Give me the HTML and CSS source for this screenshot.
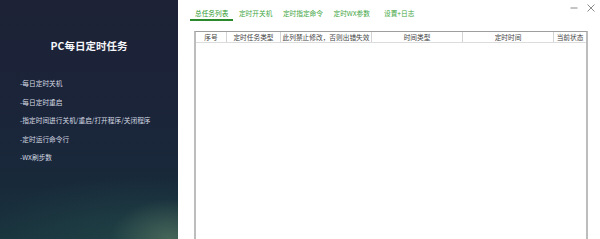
FILE: index.html
```html
<!DOCTYPE html>
<html lang="zh">
<head>
<meta charset="utf-8">
<title>PC每日定时任务</title>
<link rel="stylesheet" href="styles.css">
</head>
<body>
<div class="app">
  <aside class="sidebar">
    <h1 class="title">PC每日定时任务</h1>
    <ul class="features">
      <li>-每日定时关机</li>
      <li>-每日定时重启</li>
      <li>-指定时间进行关机/重启/打开程序/关闭程序</li>
      <li>-定时运行命令行</li>
      <li>-WX刷步数</li>
    </ul>
  </aside>
  <main class="main">
    <nav class="tabs">
      <span class="tab active">总任务列表</span>
      <span class="tab">定时开关机</span>
      <span class="tab">定时指定命令</span>
      <span class="tab">定时WX参数</span>
      <span class="tab">设置+日志</span>
    </nav>
    <div class="table">
      <div class="thead">
        <div class="th">序号</div>
        <div class="th">定时任务类型</div>
        <div class="th">此列禁止修改，否则出错失效</div>
        <div class="th">时间类型</div>
        <div class="th">定时时间</div>
        <div class="th">当前状态</div>
      </div>
      <div class="tbody"></div>
    </div>
    <div class="winctrl">
      <svg class="ico" width="8" height="8" viewBox="0 0 8 8"><path d="M0.5 4H7.5" stroke="#8a8a8a" stroke-width="1"/></svg>
      <svg class="ico" width="8" height="8" viewBox="0 0 8 8"><path d="M0.5 0.5L7.5 7.5M7.5 0.5L0.5 7.5" stroke="#8a8a8a" stroke-width="1"/></svg>
    </div>
  </main>
</div>
</body>
</html>
```
FILE: styles.css
```css
* { box-sizing: border-box; }
html, body { margin: 0; padding: 0; }
body {
  width: 600px;
  height: 239px;
  overflow: hidden;
  background: #fff;
  font-family: "Noto Sans CJK SC", "Noto Sans", sans-serif;
}
.app {
  display: flex;
  width: 600px;
  height: 239px;
}
.sidebar {
  width: 178px;
  flex: none;
  height: 239px;
  padding-top: 38px;
  background:
    radial-gradient(ellipse 60px 40px at 170px 239px, rgba(110,140,110,0.5), rgba(60,90,85,0) 100%),
    radial-gradient(ellipse 160px 70px at 140px 245px, rgba(40,85,80,0.45), rgba(30,60,70,0) 100%),
    linear-gradient(180deg, #1d2236 0%, #1b2439 45%, #18293a 75%, #19333d 100%);
  color: #fff;
}
.title {
  margin: 0;
  text-align: center;
  font-size: 10.5px;
  line-height: 16px;
  font-weight: 700;
  color: #f4f6fa;
}
.features {
  list-style: none;
  margin: 20px 0 0 0;
  padding: 0 0 0 20px;
}
.features li {
  font-size: 6.7px;
  line-height: 18.5px;
  color: #d5d9e2;
  white-space: nowrap;
}
.main {
  position: relative;
  flex: 1;
  display: flex;
  flex-direction: column;
  padding: 0 12px 0 12px;
}
.tabs {
  display: flex;
  height: 21px;
  padding-top: 7px;
}
.tab {
  padding: 0 5px;
  font-size: 6.7px;
  line-height: 12px;
  height: 14px;
  color: #3fa63f;
  white-space: nowrap;
  border-bottom: 2px solid transparent;
}
.tab + .tab { margin-left: 0.5px; }
.tab:last-child { margin-left: 4px; }
.tab.active {
  color: #2f9a2f;
  border-bottom-color: #2b8a2b;
}
.table {
  flex: 1;
  margin: 10px 0 0 4px;
  border-top: 1px solid #9e9e9e;
  border-left: 2px solid #bdbdbd;
  border-right: 2px solid #bdbdbd;
  display: flex;
  flex-direction: column;
}
.thead {
  display: grid;
  grid-template-columns: 31px 54px 91px 91px 91px 32px;
  height: 11px;
  border-bottom: 1px solid #dcdcdc;
}
.th {
  font-size: 6.7px;
  line-height: 10px;
  text-align: center;
  color: #444;
  white-space: nowrap;
  overflow: hidden;
  border-right: 1px solid #d4d4d4;
}
.th:last-child { border-right: none; }
.tbody { flex: 1; }
.winctrl {
  position: absolute;
  top: 4px;
  right: 5px;
  display: flex;
  gap: 9px;
}
.ico { display: block; }
```
